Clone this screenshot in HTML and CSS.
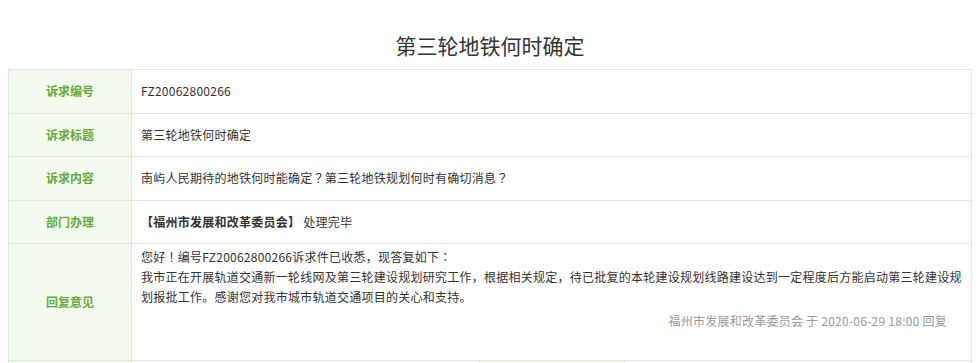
FILE: index.html
```html
<!DOCTYPE html>
<html lang="zh-CN">
<head>
    <meta charset="UTF-8">
    <meta name="viewport" content="width=device-width, initial-scale=1.0">
    <title>第三轮地铁何时确定</title>
    <link rel="stylesheet" href="styles.css">
</head>
<body>

    <h2 class="title">第三轮地铁何时确定</h2>

    <table class="detail">
        <colgroup>
            <col class="col-label">
            <col class="col-value">
            <col class="col-label2">
            <col class="col-value">
        </colgroup>
        <tr>
            <th>诉求编号</th>
            <td colspan="3">FZ20062800266</td>
        </tr>
        <tr>
            <th>诉求标题</th>
            <td colspan="3">第三轮地铁何时确定</td>
        </tr>
        <tr>
            <th>诉求内容</th>
            <td colspan="3">南屿人民期待的地铁何时能确定<span class="punc" lang="ja">？</span>第三轮地铁规划何时有确切消息<span class="punc" lang="ja">？</span></td>
        </tr>
        <tr>
            <th>部门办理</th>
            <td colspan="3"><b>【福州市发展和改革委员会】</b> 处理完毕</td>
        </tr>
        <tr class="reply-row">
            <th>回复意见</th>
            <td colspan="3" class="reply">
                <p>您好<span class="punc" lang="ja">！</span>编号FZ20062800266诉求件已收悉，现答复如下<span class="punc" lang="ja">：</span><br>我市正在开展轨道交通新一轮线网及第三轮建设规划研究工作，根据相关规定，待已批复的本轮建设规划线路建设达到一定程度后方能启动第三轮建设规划报批工作。感谢您对我市城市轨道交通项目的关心和支持。</p>
                <div class="sign">福州市发展和改革委员会 于 2020-06-29 18:00 回复</div>
            </td>
        </tr>
        <tr>
            <th>&nbsp;</th>
            <td>&nbsp;</td>
            <th>&nbsp;</th>
            <td>&nbsp;</td>
        </tr>
    </table>

</body>
</html>
```

FILE: styles.css
```css
body {
    font-family: "Noto Sans CJK SC", "Liberation Sans", sans-serif;
    font-size: 12px;
    color: #333;
    margin: 8px;
    background: #fff;
}
.title {
    margin: 0 0 9px;
    padding-top: 22px;
    font-size: 21px;
    font-weight: normal;
    line-height: 30px;
    text-align: center;
    color: #333;
}
.detail {
    width: 100%;
    border-collapse: collapse;
    table-layout: fixed;
    border: 1px solid #e4e4e4;
}
.col-label {
    width: 123px;
}
.col-label2 {
    width: 145px;
}
.detail th,
.detail td {
    border: 1px solid #e4e4e4;
    height: 42.5px;
    padding: 0 9px;
    line-height: 20px;
}
.detail th {
    background-color: #f3fbee;
    color: #68a93c;
    font-weight: bold;
    text-align: center;
}
.detail td {
    text-align: left;
    letter-spacing: 0.25px;
}
.detail td b {
    font-weight: bold;
}
.punc {
    font-family: "Noto Sans CJK JP", sans-serif;
}
.reply-row td.reply {
    height: 112.5px;
    vertical-align: top;
    padding-top: 3px;
}
.reply p {
    margin: 0;
}
.sign {
    margin-top: 4px;
    padding-right: 15px;
    text-align: right;
    color: #999;
}
```
